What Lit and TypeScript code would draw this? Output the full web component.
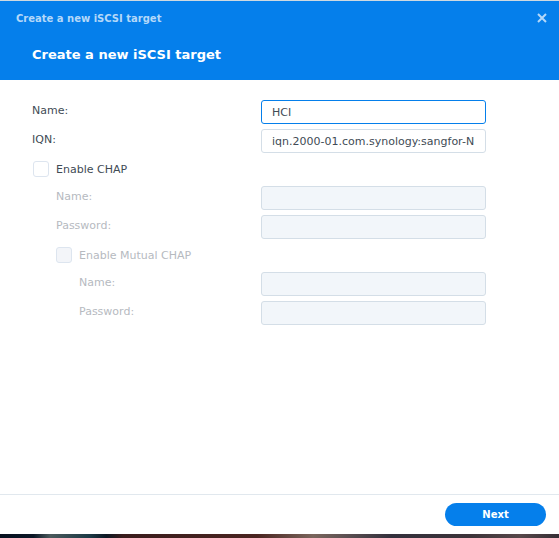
import { LitElement, html, css, CSSResultGroup, TemplateResult } from 'lit';
import { customElement, property, state } from 'lit/decorators.js';

@customElement('form-row')
export class FormRow extends LitElement {
  @property() label = '';
  @property() value = '';
  @property() type = 'text';
  @property({ type: Number }) level = 0;
  @property({ type: Boolean }) disabled = false;
  @property({ type: Boolean }) active = false;

  protected render(): TemplateResult {
    return html`
      <div class="row level-${this.level} ${this.disabled ? 'disabled' : ''}">
        <label class="label" for="field">${this.label}</label>
        <input
          class="field ${this.active ? 'active' : ''}"
          id="field"
          type=${this.type}
          .value=${this.value}
          ?disabled=${this.disabled}
        />
      </div>
    `;
  }

  static get styles(): CSSResultGroup {
    return css`
      :host {
        display: block;
      }
      .row {
        display: grid;
        grid-template-columns: 229px minmax(0, 225px);
        align-items: center;
      }
      .level-1 .label {
        padding-left: 24px;
      }
      .level-2 .label {
        padding-left: 47px;
      }
      .label {
        line-height: 22px;
        padding-bottom: 2px;
      }
      .disabled {
        color: #b6babf;
      }
      .field {
        box-sizing: border-box;
        width: 100%;
        height: 24px;
        padding: 0 10px;
        border: 1px solid #d4dee7;
        border-radius: 3px;
        background: #fff;
        color: #414b55;
        font: inherit;
        outline: none;
      }
      .field.active,
      .field:focus {
        border-color: #057feb;
      }
      .field:disabled {
        background: #f2f6fa;
      }
    `;
  }
}

@customElement('check-row')
export class CheckRow extends LitElement {
  @property() label = '';
  @property({ type: Number }) level = 0;
  @property({ type: Boolean }) checked = false;
  @property({ type: Boolean }) disabled = false;

  private onChange(e: Event): void {
    this.checked = (e.target as HTMLInputElement).checked;
    this.dispatchEvent(new CustomEvent('toggle', { detail: this.checked }));
  }

  protected render(): TemplateResult {
    return html`
      <label class="check level-${this.level} ${this.disabled ? 'disabled' : ''}">
        <input
          class="box"
          type="checkbox"
          .checked=${this.checked}
          ?disabled=${this.disabled}
          @change=${this.onChange}
        />
        <span>${this.label}</span>
      </label>
    `;
  }

  static get styles(): CSSResultGroup {
    return css`
      :host {
        display: block;
      }
      .check {
        display: flex;
        align-items: center;
        gap: 7px;
        height: 24px;
        padding-left: 1px;
      }
      .check.level-1 {
        padding-left: 24px;
      }
      .disabled {
        color: #b6babf;
      }
      .box {
        appearance: none;
        box-sizing: border-box;
        width: 16px;
        height: 16px;
        margin: 0;
        border: 1px solid #dde5ef;
        border-radius: 3px;
        background: #fff;
      }
      .box:checked {
        border-color: #057feb;
        background: #057feb;
      }
      .box:disabled {
        background: #f3f5f9;
      }
    `;
  }
}

@customElement('app-root')
export class AppRoot extends LitElement {
  @state() private chap = false;
  @state() private mutual = false;

  protected render(): TemplateResult {
    const noMutual = !this.chap || !this.mutual;
    return html`
      <div class="dialog">
        <header class="header">
          <div class="title-bar">
            <span>Create a new iSCSI target</span>
            <button class="close" aria-label="Close">
              <svg width="10" height="10" viewBox="0 0 10 10">
                <path d="M1 1L9 9M9 1L1 9" stroke="currentColor" stroke-width="2" />
              </svg>
            </button>
          </div>
          <h1 class="heading">Create a new iSCSI target</h1>
        </header>
        <form class="form">
          <div class="section">
            <form-row label="Name:" value="HCI" active></form-row>
            <form-row label="IQN:" value="iqn.2000-01.com.synology:sangfor-N"></form-row>
          </div>
          <div class="section">
            <check-row
              label="Enable CHAP"
              @toggle=${(e: CustomEvent) => (this.chap = e.detail)}
            ></check-row>
            <form-row level="1" label="Name:" ?disabled=${!this.chap}></form-row>
            <form-row level="1" label="Password:" type="password" ?disabled=${!this.chap}></form-row>
          </div>
          <div class="section">
            <check-row
              level="1"
              label="Enable Mutual CHAP"
              ?disabled=${!this.chap}
              @toggle=${(e: CustomEvent) => (this.mutual = e.detail)}
            ></check-row>
            <form-row level="2" label="Name:" ?disabled=${noMutual}></form-row>
            <form-row level="2" label="Password:" type="password" ?disabled=${noMutual}></form-row>
          </div>
        </form>
        <footer class="footer">
          <button class="next">Next</button>
        </footer>
      </div>
      <div class="desktop"></div>
    `;
  }

  static get styles(): CSSResultGroup {
    return css`
      :host {
        display: flex;
        flex-direction: column;
        min-height: 100vh;
        background: #fff;
        color: #414b55;
        font-family: Verdana, 'DejaVu Sans', sans-serif;
        font-size: 11px;
      }
      .dialog {
        flex: 1;
        display: flex;
        flex-direction: column;
        border-top: 1px solid #cfd9e0;
      }
      .header {
        background: #057feb;
        color: #fff;
      }
      .title-bar {
        display: flex;
        align-items: center;
        justify-content: space-between;
        height: 34px;
        padding: 0 12px 0 16px;
        color: #b4d8f9;
        font-size: 10px;
        font-weight: bold;
      }
      .close {
        display: flex;
        padding: 0;
        border: 0;
        background: none;
        color: inherit;
      }
      .heading {
        margin: 0;
        padding: 0 32px 5px;
        font-size: 13px;
        line-height: 40px;
      }
      .form {
        flex: 1;
        display: flex;
        flex-direction: column;
        gap: 4px;
        padding: 20px 32px;
      }
      .section {
        display: flex;
        flex-direction: column;
        gap: 5px;
      }
      .footer {
        display: flex;
        justify-content: flex-end;
        padding: 8px 13px;
        border-top: 1px solid #e1e8ee;
      }
      .next {
        width: 101px;
        height: 23px;
        padding: 0;
        border: 0;
        border-radius: 12px;
        background: #057feb;
        color: #fff;
        font: bold 10px Verdana, 'DejaVu Sans', sans-serif;
      }
      .desktop {
        height: 4px;
        background: linear-gradient(
          90deg,
          #06101f 0%,
          #0b1726 6%,
          #4b5a5c 9%,
          #1c3a46 16%,
          #0d1824 19%,
          #3a1c1c 22%,
          #4a2420 46%,
          #7a655c 56%,
          #5c5052 62%,
          #33303c 70%,
          #3c3339 84%,
          #57484a 93%,
          #352e35 100%
        );
      }
    `;
  }
}
